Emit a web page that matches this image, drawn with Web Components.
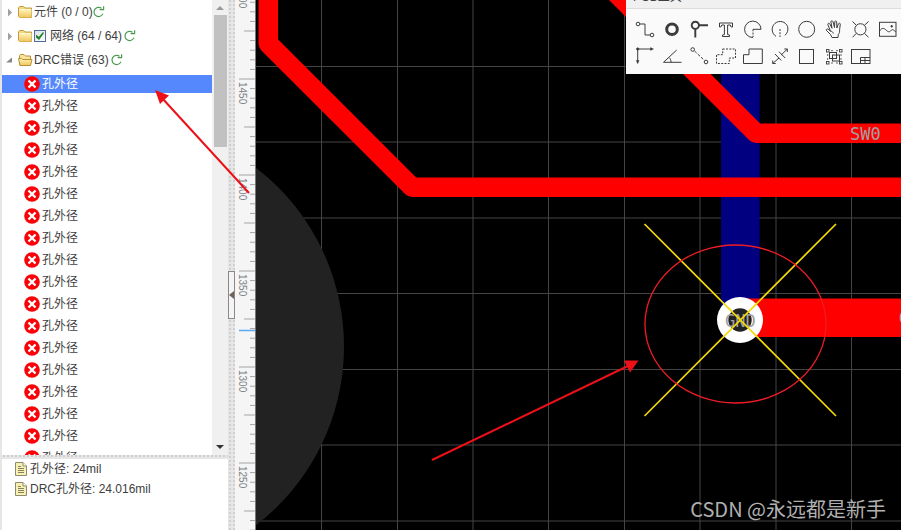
<!DOCTYPE html>
<html lang="zh">
<head>
<meta charset="utf-8">
<title>PCB</title>
<style>
html, body { margin: 0; height: 100%; }
body { font: 12px/16px "Liberation Sans", "Noto Sans CJK SC", sans-serif; color: #404040; background: #fff; overflow: hidden; }
</style>
</head>
<body>
<pcb-workspace></pcb-workspace>
<script>
const define = (name, html, setup) => customElements.define(name, class extends HTMLElement {
  constructor() {
    super();
    const t = document.createElement('template');
    t.innerHTML = html;
    this.attachShadow({ mode: 'open' }).append(t.content.cloneNode(true));
  }
  connectedCallback() { if (setup) setup(this, this.shadowRoot); }
});

define('refresh-button', `
<style>
:host { display: block; width: 12px; height: 12px; }
button { display: block; padding: 0; border: 0; background: none; width: 12px; height: 12px; }
svg { display: block; }
</style>
<button type="button" aria-label="刷新"><svg width="12" height="12" viewBox="0 0 12 12" fill="none" stroke="#4b9a4f" stroke-width="1.2"><path d="M9.9 7.6A4.6 4.6 0 1 1 8.6 2.4"/><path d="M6.6 3.6H10.6V.3" /></svg></button>`);

define('tree-folder', `
<style>
:host { display: flex; align-items: center; height: 24px; padding-left: 4px; white-space: nowrap; }
.arrow { width: 12px; height: 12px; flex: none; }
.folder { width: 16px; height: 14px; flex: none; }
:host([open]) .shut, :host(:not([open])) .open { display: none; }
refresh-button { margin-left: 2px; }
:host([tight]) refresh-button { margin-left: 0; }
</style>
<svg class="arrow" viewBox="0 0 12 12"><path class="shut" d="M2 2.5 6 6.5 2 10.5Z" fill="#a0a0a0"/><path class="open" d="M6 3.5V8.500H0Z" fill="#888"/></svg>
<svg class="folder" viewBox="0 0 16 14"><defs><linearGradient id="g" x2="0" y2="1"><stop stop-color="#fff3b8"/><stop offset="1" stop-color="#efc65a"/></linearGradient></defs>
<g class="shut" stroke="#c39a3c"><path d="M.5 11.500V2.500L1.500 1.500H5.500L7 3H13.500V12.500H1.500Z" fill="#f3d77f"/><path d="M1 4.500H13.500V12.500H1Z" fill="url(#g)" stroke="none"/><path d="M1.500 4.500H13" stroke="#fff8d4"/></g>
<g class="open" stroke="#b98f34"><path d="M1.500 12V2.500L2.500 1.500H6L7.500 3H12.500V6" fill="#f7e39a"/><path d="M2 12.500H12.500L14 6.500H4.500L3.500 5.500H.5Z" fill="url(#g)"/></g></svg>
<slot></slot><refresh-button></refresh-button>`);

define('tree-check', `
<style>
:host { display: block; margin-right: 4px; height: 12px; }
input { appearance: none; display: grid; place-items: center; margin: 0; box-sizing: border-box; width: 12px; height: 12px; border: 1px solid #4f6e94; background: linear-gradient(135deg, #d8dde0, #fff); }
input:checked::before { content: ""; width: 8px; height: 8px; background: #23822a; clip-path: polygon(0 35%, 36% 60%, 88% 0, 100% 14%, 38% 100%, 0 70%); }
</style>
<input type="checkbox" checked aria-label="网络">`);

define('drc-item', `
<style>
:host { display: flex; align-items: center; height: 22px; }
div { flex: 1; display: flex; align-items: center; gap: 2px; height: 18px; padding-left: 22px; white-space: nowrap; }
svg { width: 16px; height: 16px; flex: none; }
:host([selected]) div { background: #5588fd; color: #fff; }
</style>
<div><svg viewBox="0 0 16 16"><circle cx="8" cy="8" r="7.800" fill="#fb0208"/><path d="M4.500 4.500 11.500 11.500M11.500 4.500 4.500 11.500" stroke="#fff" stroke-width="2.400"/></svg><slot></slot></div>`);

define('detail-row', `
<style>
:host { display: flex; align-items: center; gap: 3px; height: 20px; padding-left: 13px; white-space: nowrap; }
svg { width: 12px; height: 14px; flex: none; }
</style>
<svg viewBox="0 0 12 14"><path d="M.5.5H8L11.500 4V13.500H.5Z" fill="#f7f0ae" stroke="#8d8a70"/><path d="M8 .5V4H11.500" fill="#fff" stroke="#8d8a70"/><path d="M3 4.500H6M3 6.500H9M3 8.500H9M3 10.500H9" stroke="#85816a"/></svg><slot></slot>`);

define('scroll-rail', `
<style>
:host { display: flex; flex-direction: column; width: 16px; flex: none; background: #f0f0f0; }
button { display: grid; place-items: center; height: 15px; padding: 0; border: 0; background: none; }
.track { flex: 1; padding: 0 1px 0 2px; }
.thumb { height: 31%; background: #c1c1c1; }
</style>
<button type="button" aria-label="向上滚动"><svg width="8" height="5"><path d="M0 5 4 1 8 5Z" fill="#9a9a9a"/></svg></button>
<div class="track"><div class="thumb"></div></div>
<button type="button" aria-label="向下滚动"><svg width="8" height="5"><path d="M0 0H8L4 4Z" fill="#333"/></svg></button>`);

define('split-bar', `
<style>
:host { display: flex; flex-direction: column; justify-content: center; flex: none; background: radial-gradient(circle at 1px 1px, #cfcfcf 1px, transparent 1px) 1px 0 / 4px 4px #e6e6e6; }
:host([vertical]) { width: 7px; }
:host(:not([vertical])) { height: 4px; }
:host(:not([vertical])) button { display: none; }
button { display: grid; place-items: center; box-sizing: border-box; width: 7px; height: 48px; padding: 0; border: 1px solid #8c8888; background: #f4f4f4; margin-top: 59px; }
</style>
<button type="button" aria-label="收起面板"><svg width="5" height="8"><path d="M5 0V8L0 4Z" fill="#6e625c"/></svg></button>`);

define('tree-panel', `
<style>
:host { display: flex; flex-direction: column; width: 228px; flex: none; box-sizing: border-box; border-left: 2px solid #e6e6e6; }
.upper { flex: 1; min-height: 0; display: flex; }
.tree { flex: 1; min-width: 0; overflow: hidden; }
.items { padding-top: 1px; }
.lower { height: 71px; flex: none; }
</style>
<div class="upper"><div class="tree">
<tree-folder tight>元件 (0 / 0)</tree-folder>
<tree-folder><tree-check></tree-check>网络 (64 / 64)</tree-folder>
<tree-folder open>DRC错误 (63)</tree-folder>
<div class="items"></div></div><scroll-rail></scroll-rail></div>
<split-bar></split-bar>
<div class="lower"><detail-row>孔外径: 24mil</detail-row><detail-row>DRC孔外径: 24.016mil</detail-row></div>`,
(el, root) => {
  root.querySelector('.items').innerHTML = '<drc-item>孔外径</drc-item>'.repeat(18);
  root.querySelector('drc-item').setAttribute('selected', '');
});

define('side-ruler', `
<style>
:host { display: block; width: 20px; flex: none; background: #f5f5f5; overflow: hidden; }
svg { display: block; width: 100%; height: 100%; }
text { font: 10px "Liberation Sans", sans-serif; fill: #7d8287; }
</style>
<svg></svg>`, (el, root) => {
  let s = '';
  for (let n = -10; n < 120; n++) {
    const y = 79 + n * 9.6;
    const x = n % 10 === 0 ? 4 : n % 5 === 0 ? 9 : 15;
    s += `<path d="M${x} ${y}H20" stroke="#a4a4a4"/>`;
    if (n % 10 === 0 && n < 50) s += `<text transform="translate(4 ${y + 3}) rotate(90)">${1450 - n * 5}</text>`;
  }
  s += '<path d="M4 330.500H20" stroke="#5eaaf2" stroke-width="1.500"/>';
  root.querySelector('svg').innerHTML = s;
});

const icons = [
  ['导线', '<circle cx="6" cy="8" r="1.800"/><path d="M8 8H13V19H18"/><circle cx="20" cy="19" r="1.800"/>'],
  ['焊盘', '<circle cx="13" cy="13.300" r="5.300" stroke-width="3"/>'],
  ['过孔', '<g stroke-width="1.900"><circle cx="9.300" cy="9.300" r="3.600"/><path d="M13 9.300H22M9.300 13V21.500"/></g>'],
  ['文本', '<path d="M6.500 7H19.500V11H18.200L17.200 9H14.600V18.600L16.500 19V20.500H9.500V19L11.400 18.600V9H8.800L7.800 11H6.500Z"/>'],
  ['圆弧', '<path d="M21 13.300A8.200 8.200 0 1 0 13 21.500M13 13.300H21"/><path d="M13 13.300V21" stroke-dasharray="2 1.200"/>'],
  ['中心圆弧', '<path d="M20.600 10.500A8 8 0 1 0 9 20.300M20.600 10.500C21.500 14 20.500 17 18 19.300"/><path d="M13 13V21" stroke-dasharray="2 1.200"/>'],
  ['圆', '<circle cx="12.700" cy="13.300" r="8"/>'],
  ['移动', '<path d="M11 21.500 9.500 18.500 5.300 14.300C5 13.200 6.300 12.500 7.200 13.200L9.500 15.200 6.800 8.500C6.600 7.200 8.200 6.800 8.800 8L11 12.300 9.900 5.700C10 4.500 11.600 4.400 12 5.600L13.500 11.500 13.800 5.700C14.100 4.600 15.600 4.800 15.700 6L15.900 12 17.500 7.700C18.100 6.600 19.500 7.200 19.300 8.400L18.600 13.500C18.700 16 18.500 17 17.300 18.600L17 21.500ZM9.500 15.200C11 15.200 12 16 12.300 17.500"/>'],
  ['通孔', '<circle cx="12.400" cy="13.300" r="5.600"/><path d="M8.400 9.300 4.500 5.500M16.400 9.300 20.500 5.500M8.400 17.300 4.500 21.300M16.400 17.300 20.500 21.300"/>'],
  ['图片', '<rect x="4.500" y="6.300" width="16.500" height="14"/><path d="M4.500 15C7 11.500 9 12 11 14S14.500 16.500 16 14.500 19 14.500 21 16"/><circle cx="16.700" cy="10.300" r=".8" fill="#333"/>'],
  ['原点', '<path d="M5.700 6H19M5.700 6V18"/><path d="M18.500 4.600 21.500 6 18.500 7.400ZM4.300 17.500 5.700 20.700 7.100 17.500Z" fill="#333" stroke-width=".4"/><circle cx="5.700" cy="6" r="1.100" fill="#333"/>'],
  ['量角器', '<path d="M17.700 7 4.500 19.300H22.500M10 14.500C11.500 15.800 12 17.300 12 19.300"/>'],
  ['连线', '<circle cx="6.700" cy="6.500" r="1.800"/><circle cx="20" cy="19" r="1.800"/><path d="M8.500 8 18.500 17.500" stroke-dasharray="3 1.500"/>'],
  ['铺铜', '<path d="M9.700 6H22.500V15H16.300V20.500H3.500V11.700H9.700Z" stroke-dasharray="2 1.300"/>'],
  ['实心填充', '<path d="M9 6H22.300V20.500H3.500V11.700H9Z"/>'],
  ['尺寸', '<path d="M5.700 20.500 12 15M20.300 6 14.200 12M8 11 14.300 17.500M12 8.700 18.200 15M5.700 17.500V20.500H8.700M17.300 6H20.300V9"/>'],
  ['矩形', '<rect x="5.500" y="6.500" width="14" height="14"/>'],
  ['组合', '<rect x="8.500" y="9.500" width="7" height="6"/><rect x="11.500" y="12" width="7" height="6"/><g stroke-width=".9"><rect x="5.500" y="6.500" width="2.500" height="2.500"/><rect x="18.500" y="6.500" width="2.500" height="2.500"/><rect x="5.500" y="18.500" width="2.500" height="2.500"/><rect x="18.500" y="18.500" width="2.500" height="2.500"/></g><path d="M10 7.700H12M15 7.700H17M6.700 11V13M6.700 15V17M10 20H12M15 20H17M20 11V13M20 15V17" stroke-width=".8"/>'],
  ['面板', '<rect x="3.500" y="6.500" width="18.500" height="14"/><path d="M12.500 20.500V14.500H22M12.500 17.500H22M17 14.500V20.500"/>']
];

define('tool-button', `
<style>
:host { display: block; }
button { display: block; width: 27px; height: 27px; padding: 0; border: 0; background: none; }
svg { display: block; width: 27px; height: 27px; fill: none; stroke: #3c3c3c; stroke-width: 1; }
</style>
<button type="button"><svg viewBox="0 0 27 27"></svg></button>`, (el, root) => {
  const [name, art] = icons[+el.getAttribute('icon')];
  root.querySelector('button').setAttribute('aria-label', name);
  root.querySelector('svg').innerHTML = art;
});

define('tool-palette', `
<style>
:host { display: block; background: #fafafa; }
header { height: 28px; line-height: 16px; padding: 8px 0 0 7px; background: #f0f0f0; border-bottom: 1px solid #dcdcdc; box-sizing: border-box; }
.tools { display: grid; grid-template-columns: repeat(10, 27px); padding: 7px 6px 4px; }
</style>
<header>PCB工具</header><div class="tools"></div>`, (el, root) => {
  root.querySelector('.tools').innerHTML = icons.map((_, i) => `<tool-button icon="${i}"></tool-button>`).join('');
});

define('pcb-canvas', `
<style>
:host { display: block; position: relative; flex: 1; min-width: 0; background: #000; overflow: hidden; }
.board { position: absolute; inset: 0; width: 100%; height: 100%; }
.net { font: 17px "DejaVu Sans Mono", monospace; fill: #a0a0a0; }
tool-palette { position: absolute; left: 371px; top: -19px; }
.mark { position: absolute; right: 15px; bottom: 8px; font: 20px/26px "Noto Sans CJK SC", sans-serif; color: #b0b0b0; white-space: nowrap; }
</style>
<svg class="board" viewBox="255 0 646 530" preserveAspectRatio="xMinYMin slice">
<path d="M321.500 0V530M397.500 0V530M473 0V530M548.500 0V530M624.500 0V530M700 0V530M776 0V530M851.500 0V530M255 66.500H901M255 142H901M255 218H901M255 293.500H901M255 369.500H901M255 445H901M255 521H901" stroke="#444"/>
<circle cx="118.500" cy="346.500" r="225.500" fill="#222"/>
<path d="M255.500 0V530" stroke="#777"/>
<path d="M740.300 0V320" stroke="#000080" stroke-width="38.500"/>
<g fill="none" stroke="#f00" stroke-linejoin="round"><path d="M268.300 -10V43.500L412 187.200H910M612.800 -10 756 133.200H910" stroke-width="19.500"/><path d="M740 317.700H910" stroke-width="38.500"/></g>
<text class="net" x="850" y="140">SW0</text>
<text class="net" x="899" y="324">G</text>
<circle cx="740" cy="320" r="23" fill="#fff"/><circle cx="740" cy="320" r="11.700" fill="#222"/>
<text class="net" x="725" y="327">GND</text>
<path d="M644.500 224 836 416M836 224 644.500 416" stroke="#f5d70a" stroke-width="1.700"/>
<ellipse cx="735.500" cy="324" rx="90.500" ry="79" fill="none" stroke="#ed1c24" stroke-width="1.300"/>
</svg>
<tool-palette></tool-palette>
<div class="mark">CSDN @永远都是新手</div>`);

define('pcb-workspace', `
<style>
:host { display: flex; position: relative; height: 100vh; overflow: hidden; }
.notes { position: absolute; left: 0; top: 0; width: 100%; height: 100%; pointer-events: none; }
</style>
<tree-panel></tree-panel><split-bar vertical></split-bar><side-ruler></side-ruler><pcb-canvas></pcb-canvas>
<svg class="notes" fill="#ed1019" stroke="#ed1019"><path d="M249 193 162 98M432 460 628 366" stroke-width="2"/><path d="M155 90 169 95.500 160 104ZM624 360.500H638.500L630 372.500Z" stroke="none"/></svg>`);
</script>
</body>
</html>
